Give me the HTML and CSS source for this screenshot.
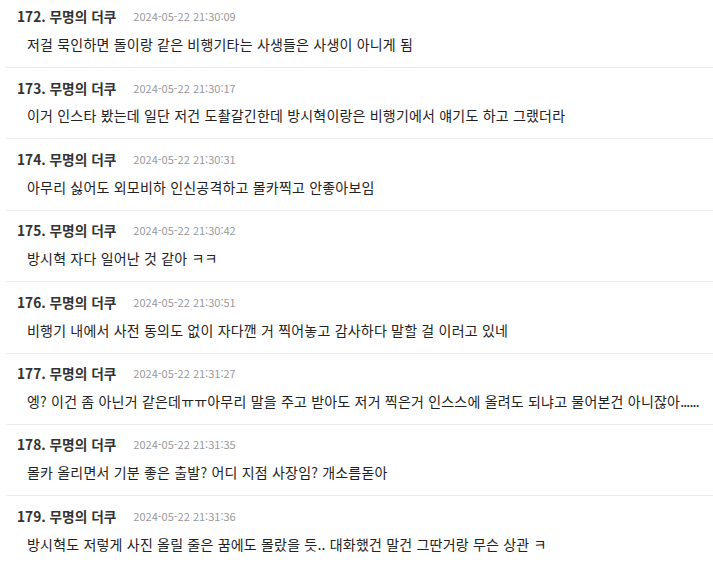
FILE: index.html
```html
<!DOCTYPE html>
<html lang="ko">
<head>
<meta charset="utf-8">
<link rel="stylesheet" href="styles.css">
</head>
<body>
<ul class="comments">
  <li class="comment">
    <div class="meta"><span class="author">172. 무명의 더쿠</span><span class="date">2024-05-22 21:30:09</span></div>
    <p class="text">저걸 묵인하면 돌이랑 같은 비행기타는 사생들은 사생이 아니게 됨</p>
  </li>
  <li class="comment">
    <div class="meta"><span class="author">173. 무명의 더쿠</span><span class="date">2024-05-22 21:30:17</span></div>
    <p class="text">이거 인스타 봤는데 일단 저건 도촬갈긴한데 방시혁이랑은 비행기에서 얘기도 하고 그랬더라</p>
  </li>
  <li class="comment">
    <div class="meta"><span class="author">174. 무명의 더쿠</span><span class="date">2024-05-22 21:30:31</span></div>
    <p class="text">아무리 싫어도 외모비하 인신공격하고 몰카찍고 안좋아보임</p>
  </li>
  <li class="comment">
    <div class="meta"><span class="author">175. 무명의 더쿠</span><span class="date">2024-05-22 21:30:42</span></div>
    <p class="text">방시혁 자다 일어난 것 같아 ㅋㅋ</p>
  </li>
  <li class="comment">
    <div class="meta"><span class="author">176. 무명의 더쿠</span><span class="date">2024-05-22 21:30:51</span></div>
    <p class="text">비행기 내에서 사전 동의도 없이 자다깬 거 찍어놓고 감사하다 말할 걸 이러고 있네</p>
  </li>
  <li class="comment">
    <div class="meta"><span class="author">177. 무명의 더쿠</span><span class="date">2024-05-22 21:31:27</span></div>
    <p class="text">엥? 이건 좀 아닌거 같은데ㅠㅠ아무리 말을 주고 받아도 저거 찍은거 인스스에 올려도 되냐고 물어본건 아니잖아<span class="dots">......</span></p>
  </li>
  <li class="comment">
    <div class="meta"><span class="author">178. 무명의 더쿠</span><span class="date">2024-05-22 21:31:35</span></div>
    <p class="text">몰카 올리면서 기분 좋은 출발? 어디 지점 사장임? 개소름돋아</p>
  </li>
  <li class="comment">
    <div class="meta"><span class="author">179. 무명의 더쿠</span><span class="date">2024-05-22 21:31:36</span></div>
    <p class="text">방시혁도 저렇게 사진 올릴 줄은 꿈에도 몰랐을 듯.. 대화했건 말건 그딴거랑 무슨 상관 ㅋ</p>
  </li>
</ul>
</body>
</html>
```
FILE: styles.css
```css
html, body {
  margin: 0;
  padding: 0;
  background: #fff;
}
body {
  font-family: "Noto Sans CJK KR", "Noto Sans", sans-serif;
  color: #333;
  overflow: hidden;
}
.comments {
  list-style: none;
  margin: -3.4px 0 0 6px;
  padding: 0;
}
.comment {
  padding: 9.5px 0 13px 11px;
  border-bottom: 1px solid #ebebeb;
}
.meta {
  display: flex;
  align-items: center;
  height: 20px;
  gap: 17px;
}
.author {
  font-size: 13.7px;
  font-weight: bold;
  color: #333;
}
.date {
  font-size: 11px;
  color: #999;
}
.text {
  margin: 7.9px 0 0 10px;
  height: 20px;
  line-height: 20px;
  font-size: 14px;
  letter-spacing: 0.2px;
  color: #222;
  white-space: nowrap;
}
.dots {
  letter-spacing: -0.8px;
}
```
